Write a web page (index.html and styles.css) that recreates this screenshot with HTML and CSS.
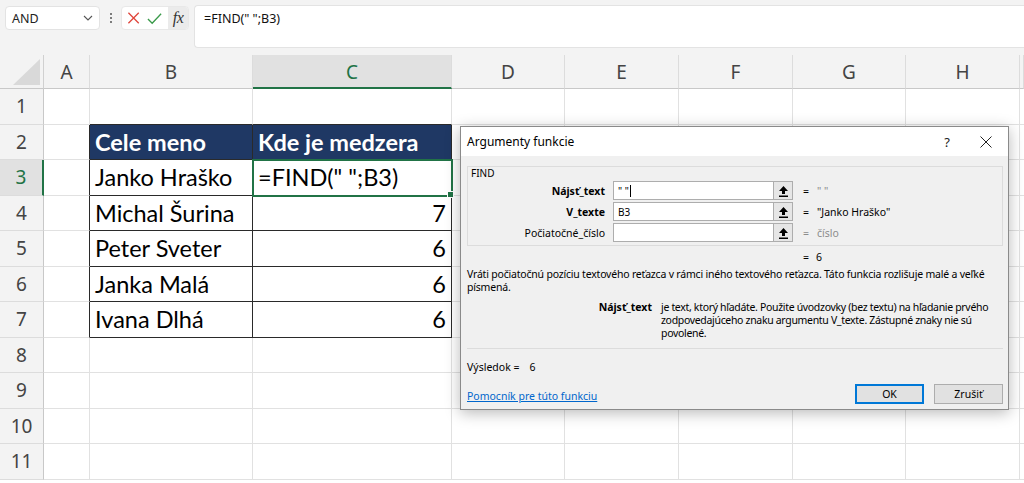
FILE: index.html
```html
<!DOCTYPE html>
<html lang="sk">
<head>
<meta charset="utf-8">
<title>Excel FIND</title>
<link rel="stylesheet" href="styles.css">
</head>
<body>
<div class="app">
  <div class="toolbar">
    <div class="namebox">
      <span class="nb-text">AND</span>
      <svg class="chev" width="10" height="6" viewBox="0 0 10 6"><path d="M1 1 L5 5 L9 1" fill="none" stroke="#555" stroke-width="1.1"/></svg>
    </div>
    <div class="vdots"><i></i><i></i><i></i></div>
    <div class="fbuttons">
      <svg class="ic-x" width="14" height="14" viewBox="0 0 14 14"><path d="M1.5 1.5 L12.5 12.5 M12.5 1.5 L1.5 12.5" stroke="#e0463c" stroke-width="1.4" fill="none"/></svg>
      <svg class="ic-ok" width="16" height="13" viewBox="0 0 16 13"><path d="M1 7 L5.5 11.5 L15 1.5" stroke="#3a9a4a" stroke-width="1.4" fill="none"/></svg>
      <span class="fx">fx</span>
    </div>
    <div class="formula">=FIND(" ";B3)</div>
  </div>

  <div class="sheet">
    <!-- header row -->
    <div class="corner"><svg width="28" height="27" viewBox="0 0 28 27"><path d="M27 0 L27 26 L0 26 Z" fill="#d9d9d9"/></svg></div>
    <div class="ch">A</div>
    <div class="ch">B</div>
    <div class="ch sel">C</div>
    <div class="ch">D</div>
    <div class="ch">E</div>
    <div class="ch">F</div>
    <div class="ch">G</div>
    <div class="ch">H</div>
    <div class="ch last"></div>

    <!-- row 1 -->
    <div class="rh">1</div>
    <div class="c"></div>
    <div class="c tb-top"></div>
    <div class="c tb-top"></div>
    <div class="c"></div><div class="c"></div><div class="c"></div><div class="c"></div><div class="c"></div><div class="c last"></div>

    <!-- row 2 -->
    <div class="rh">2</div>
    <div class="c tb-left"></div>
    <div class="c t hd">Cele meno</div>
    <div class="c t hd">Kde je medzera</div>
    <div class="c"></div><div class="c"></div><div class="c"></div><div class="c"></div><div class="c"></div><div class="c last"></div>

    <!-- row 3 -->
    <div class="rh sel">3</div>
    <div class="c tb-left"></div>
    <div class="c t">Janko Hraško</div>
    <div class="c t active">=FIND(" ";B3)</div>
    <div class="c"></div><div class="c"></div><div class="c"></div><div class="c"></div><div class="c"></div><div class="c last"></div>

    <!-- row 4 -->
    <div class="rh">4</div>
    <div class="c tb-left"></div>
    <div class="c t">Michal Šurina</div>
    <div class="c t num">7</div>
    <div class="c"></div><div class="c"></div><div class="c"></div><div class="c"></div><div class="c"></div><div class="c last"></div>

    <!-- row 5 -->
    <div class="rh">5</div>
    <div class="c tb-left"></div>
    <div class="c t">Peter Sveter</div>
    <div class="c t num">6</div>
    <div class="c"></div><div class="c"></div><div class="c"></div><div class="c"></div><div class="c"></div><div class="c last"></div>

    <!-- row 6 -->
    <div class="rh">6</div>
    <div class="c tb-left"></div>
    <div class="c t">Janka Malá</div>
    <div class="c t num">6</div>
    <div class="c"></div><div class="c"></div><div class="c"></div><div class="c"></div><div class="c"></div><div class="c last"></div>

    <!-- row 7 -->
    <div class="rh">7</div>
    <div class="c tb-left"></div>
    <div class="c t">Ivana Dlhá</div>
    <div class="c t num">6</div>
    <div class="c"></div><div class="c"></div><div class="c"></div><div class="c"></div><div class="c"></div><div class="c last"></div>

    <!-- rows 8-11 -->
    <div class="rh">8</div>
    <div class="c"></div><div class="c"></div><div class="c"></div><div class="c"></div><div class="c"></div><div class="c"></div><div class="c"></div><div class="c"></div><div class="c last"></div>
    <div class="rh">9</div>
    <div class="c"></div><div class="c"></div><div class="c"></div><div class="c"></div><div class="c"></div><div class="c"></div><div class="c"></div><div class="c"></div><div class="c last"></div>
    <div class="rh">10</div>
    <div class="c"></div><div class="c"></div><div class="c"></div><div class="c"></div><div class="c"></div><div class="c"></div><div class="c"></div><div class="c"></div><div class="c last"></div>
    <div class="rh">11</div>
    <div class="c"></div><div class="c"></div><div class="c"></div><div class="c"></div><div class="c"></div><div class="c"></div><div class="c"></div><div class="c"></div><div class="c last"></div>
  </div>

  <div class="dialog">
    <div class="dlg-title">
      <span class="dlg-caption">Argumenty funkcie</span>
      <span class="dlg-help">?</span>
      <svg class="dlg-close" width="12" height="12" viewBox="0 0 12 12"><path d="M0.5 0.5 L11.5 11.5 M11.5 0.5 L0.5 11.5" stroke="#222" stroke-width="1" fill="none"/></svg>
    </div>
    <div class="dlg-body">
      <div class="group">
        <div class="group-name">FIND</div>
        <div class="args">
          <div class="arg-label b">Nájsť_text</div>
          <div class="arg-input"><span class="txt">" "</span><span class="caret"></span></div>
          <div class="ref"><svg width="11" height="12" viewBox="0 0 11 12"><path d="M5.5 1 L1 6 L4 6 L4 9 L7 9 L7 6 L10 6 Z" fill="#000"/><rect x="1" y="10.5" width="9" height="1.5" fill="#000"/></svg></div>
          <div class="eq">=</div>
          <div class="val gray">" "</div>

          <div class="arg-label b">V_texte</div>
          <div class="arg-input"><span class="txt">B3</span></div>
          <div class="ref"><svg width="11" height="12" viewBox="0 0 11 12"><path d="M5.5 1 L1 6 L4 6 L4 9 L7 9 L7 6 L10 6 Z" fill="#000"/><rect x="1" y="10.5" width="9" height="1.5" fill="#000"/></svg></div>
          <div class="eq">=</div>
          <div class="val">"Janko Hraško"</div>

          <div class="arg-label">Počiatočné_číslo</div>
          <div class="arg-input"></div>
          <div class="ref"><svg width="11" height="12" viewBox="0 0 11 12"><path d="M5.5 1 L1 6 L4 6 L4 9 L7 9 L7 6 L10 6 Z" fill="#000"/><rect x="1" y="10.5" width="9" height="1.5" fill="#000"/></svg></div>
          <div class="eq gray">=</div>
          <div class="val gray">číslo</div>
        </div>
      </div>
      <div class="result-line"><span class="eq">=</span><span class="val">6</span></div>
      <div class="desc">Vráti počiatočnú pozíciu textového reťazca v rámci iného textového reťazca. Táto funkcia rozlišuje malé a veľké písmená.</div>
      <div class="param">
        <div class="param-name">Nájsť_text</div>
        <div class="param-desc">je text, ktorý hľadáte. Použite úvodzovky (bez textu) na hľadanie prvého zodpovedajúceho znaku argumentu V_texte. Zástupné znaky nie sú povolené.</div>
      </div>
      <div class="sep"></div>
      <div class="vysledok">Výsledok =<span class="vys-val">6</span></div>
      <div class="footer">
        <a class="help-link" href="#">Pomocník pre túto funkciu</a>
        <div class="btns">
          <button class="btn primary">OK</button>
          <button class="btn">Zrušiť</button>
        </div>
      </div>
    </div>
  </div>
</div>
</body>
</html>
```

FILE: styles.css
```css
* { box-sizing: border-box; }
html, body { margin: 0; padding: 0; }
body {
  width: 1024px;
  height: 483px;
  overflow: hidden;
  background: #fff;
  font-family: "Noto Sans", "Open Sans", sans-serif;
}
.app {
  position: relative;
  width: 1024px;
  height: 483px;
  overflow: hidden;
}

/* toolbar */
.toolbar {
  height: 55px;
  background: #f3f3f3;
  display: flex;
  align-items: flex-start;
  padding: 5px 0 0 5px;
}
.namebox {
  width: 95px;
  height: 24px;
  margin-top: 1px;
  background: #fff;
  border: 1px solid #e3e3e3;
  border-radius: 4px;
  display: flex;
  align-items: center;
  justify-content: space-between;
  padding: 0 6px 0 6px;
  font-size: 12.5px;
  color: #222;
}
.vdots {
  width: 21px;
  height: 24px;
  margin-top: 1px;
  display: flex;
  flex-direction: column;
  align-items: center;
  justify-content: center;
  gap: 2px;
}
.vdots i {
  display: block;
  width: 2px;
  height: 2px;
  background: #555;
  border-radius: 1px;
}
.fbuttons {
  width: 68px;
  height: 24px;
  margin-top: 1px;
  background: #fff;
  border: 1px solid #e8e8e8;
  border-radius: 4px;
  display: flex;
  align-items: center;
  padding-left: 5px;
  gap: 6px;
  overflow: hidden;
}
.ic-ok { margin-left: 1px; }
.fx {
  margin-left: auto;
  width: 21px;
  height: 22px;
  background: #ebebeb;
  font-family: "Liberation Serif", "DejaVu Serif", serif;
  font-style: italic;
  font-size: 16px;
  color: #333;
  display: flex;
  align-items: center;
  justify-content: center;
  letter-spacing: -0.5px;
}
.formula {
  flex: 1;
  margin-left: 5px;
  height: 43px;
  background: #fff;
  border: 1px solid #e3e3e3;
  border-right: none;
  border-radius: 4px 0 0 4px;
  padding: 4px 0 0 9px;
  font-size: 12.5px;
  color: #111;
}

/* sheet */
.sheet {
  display: grid;
  grid-template-columns: 44px 46px 163px 199px 113px 114px 114px 113px 114px 4px;
  grid-template-rows: 34px repeat(11, 35.5px);
  font-family: "Lato", "Liberation Sans", sans-serif;
}
.corner {
  background: #f3f3f3;
  border-right: 1px solid #d0d0d0;
  border-bottom: 1px solid #c8c8c8;
  display: flex;
  align-items: flex-end;
  justify-content: flex-end;
  padding: 0 2px 2px 0;
}
.ch {
  background: #f3f3f3;
  border-right: 1px solid #dcdcdc;
  border-bottom: 1px solid #c8c8c8;
  display: flex;
  align-items: center;
  justify-content: center;
  font-family: "Noto Sans", "Open Sans", sans-serif;
  font-size: 19px;
  color: #444;
  padding-top: 1px;
}
.ch.sel {
  background: #e1e1e1;
  color: #217346;
  border-bottom: 2px solid #217346;
}
.rh {
  background: #f3f3f3;
  border-right: 1px solid #c8c8c8;
  border-bottom: 1px solid #dcdcdc;
  display: flex;
  align-items: center;
  justify-content: center;
  font-family: "Noto Sans", "Open Sans", sans-serif;
  font-size: 19px;
  color: #444;
}
.rh.sel {
  background: #e1e1e1;
  color: #217346;
  border-right: 2px solid #217346;
}
.c {
  border-right: 1px solid #e1e1e1;
  border-bottom: 1px solid #e1e1e1;
  background: #fff;
  position: relative;
}
.c.last { border-right: none; }
.c.tb-top { border-bottom-color: #2a2a2a; }
.c.tb-left { border-right-color: #2a2a2a; }
.c.t {
  border-right-color: #2a2a2a;
  border-bottom-color: #2a2a2a;
  display: flex;
  align-items: center;
  padding: 0 5px 0 5px;
  font-size: 23.5px;
  color: #000;
  white-space: nowrap;
}
.c.hd {
  background: #1f3864;
  color: #fff;
  font-weight: bold;
}
.c.num { justify-content: flex-end; }
.c.active {
  outline: 2px solid #217346;
  outline-offset: -1px;
  z-index: 1;
}
.c.active::after {
  content: "";
  position: absolute;
  right: -3px;
  bottom: -3px;
  width: 5px;
  height: 5px;
  background: #217346;
  border: 1px solid #fff;
}

/* dialog */
.dialog {
  position: absolute;
  left: 460px;
  top: 126px;
  width: 549px;
  height: 284px;
  background: #f0f0f0;
  border: 1px solid #8a8a8a;
  box-shadow: 0 3px 14px rgba(0,0,0,0.28);
  font-family: "Noto Sans", "Open Sans", sans-serif;
  font-size: 10.5px;
  color: #000;
  z-index: 5;
}
.dlg-title {
  height: 29px;
  background: #fff;
  display: flex;
  align-items: center;
  padding-left: 6px;
}
.dlg-caption { font-size: 12px; flex: 1; }
.dlg-help { font-size: 13px; color: #222; margin-right: 30px; }
.dlg-close { margin-right: 16px; }
.dlg-body { padding: 0 5px 0 6px; }
.group {
  margin-top: 10px;
  height: 80px;
  border: 1px solid #dcdcdc;
  position: relative;
}
.group-name {
  position: absolute;
  left: 3px;
  top: -1px;
  font-size: 10px;
}
.args {
  display: grid;
  grid-template-columns: 145px 160px 30px 14px 1fr;
  grid-template-rows: 19px 19px 19px;
  row-gap: 2px;
  margin-top: 14px;
  align-items: center;
}
.arg-label {
  text-align: right;
  padding-right: 8px;
}
.arg-label.b { font-weight: bold; }
.arg-input {
  height: 19px;
  background: #fff;
  border: 1px solid #adadad;
  border-right: none;
  display: flex;
  align-items: center;
  padding-left: 4px;
  font-size: 10px;
}
.arg-input .txt { color: #000; }
.caret {
  display: inline-block;
  width: 1px;
  height: 12px;
  background: #000;
  margin-left: 1px;
}
.ref {
  width: 20px;
  height: 19px;
  background: #e6e6e6;
  border: 1px solid #adadad;
  display: flex;
  align-items: center;
  justify-content: center;
}
.gray { color: #8c8c8c; }
.result-line {
  height: 22px;
  display: flex;
  align-items: center;
  padding-left: 336px;
}
.result-line .val { margin-left: 7px; }
.desc {
  line-height: 13px;
  letter-spacing: -0.2px;
}
.param {
  display: flex;
  margin-top: 7px;
  line-height: 13px;
}
.param-name {
  width: 194px;
  text-align: right;
  font-weight: bold;
  padding-right: 9px;
  flex: none;
}
.param-desc {
  flex: 1;
  letter-spacing: -0.32px;
}
.sep {
  margin-top: 8px;
  height: 1px;
  background: #dcdcdc;
}
.vysledok {
  margin-top: 11px;
  height: 14px;
  font-size: 10.5px;
}
.vys-val { margin-left: 10px; }
.footer {
  margin-top: 10px;
  display: flex;
  align-items: center;
  justify-content: space-between;
}
.help-link {
  color: #0066cc;
  text-decoration: underline;
  font-size: 10.5px;
  margin-top: 3px;
}
.btns { display: flex; gap: 10px; }
.btn {
  width: 69px;
  height: 20px;
  background: #e1e1e1;
  border: 1px solid #adadad;
  font-family: "Noto Sans", "Open Sans", sans-serif;
  font-size: 10.5px;
  color: #000;
  padding: 0;
}
.btn.primary { border: 2px solid #0078d7; }
```
